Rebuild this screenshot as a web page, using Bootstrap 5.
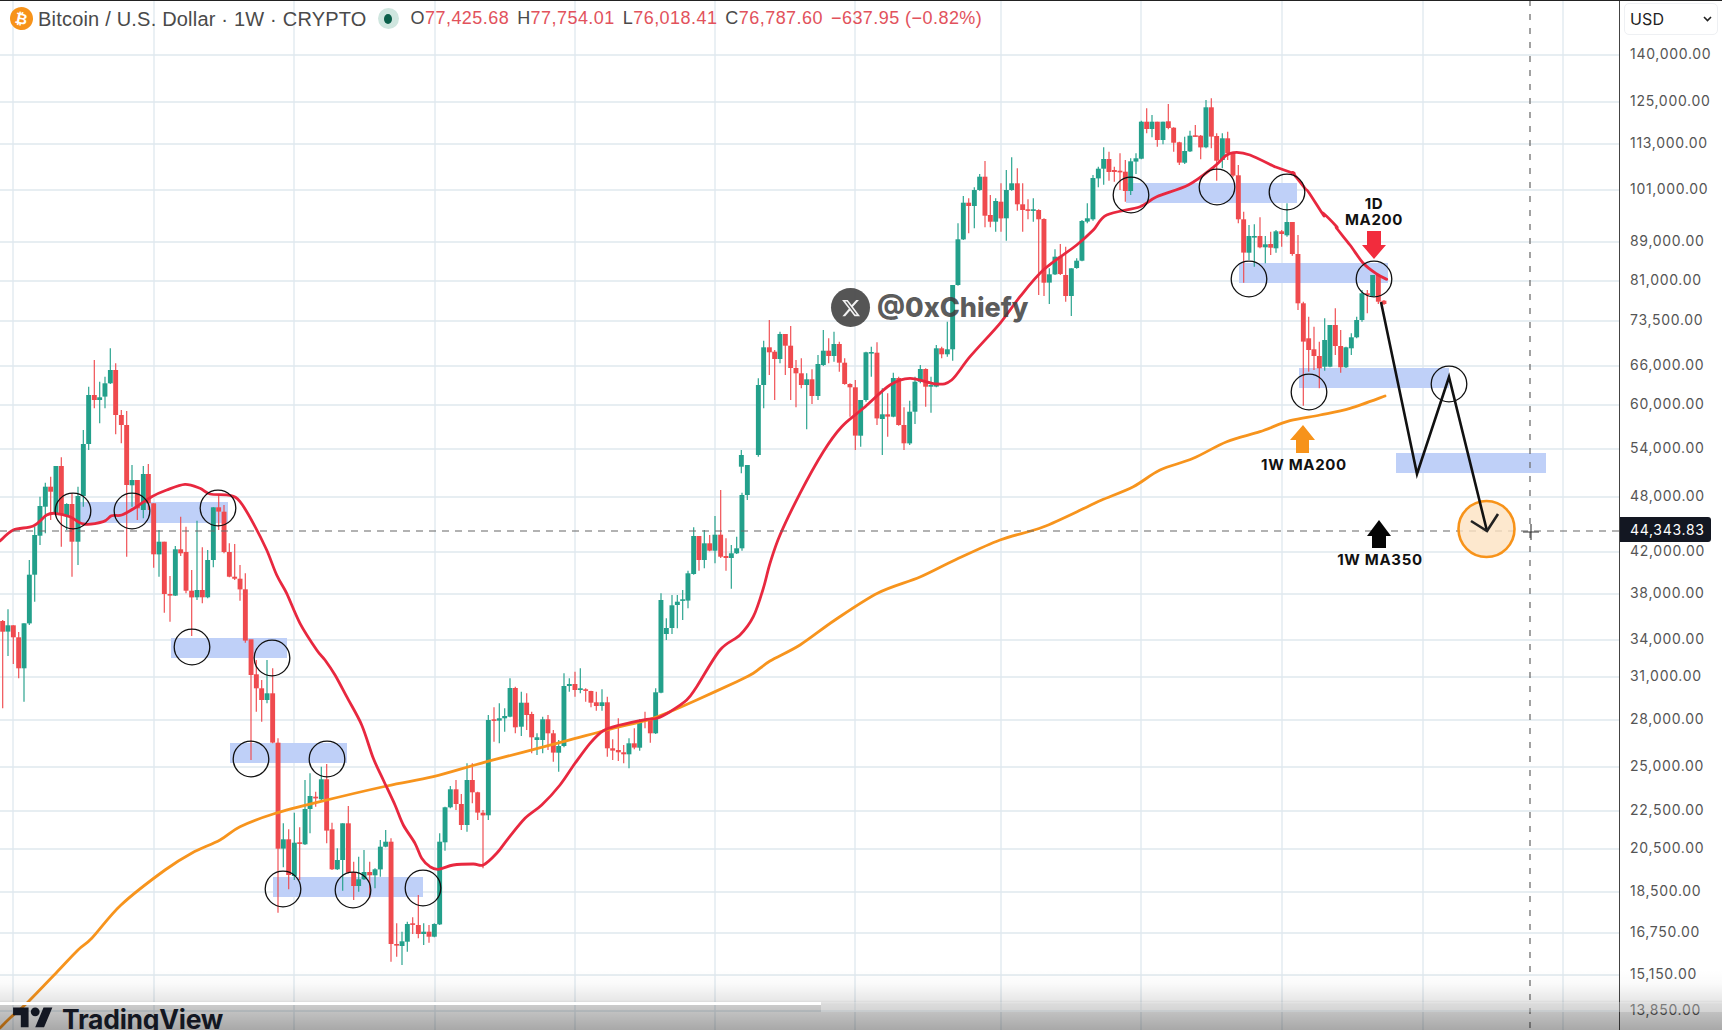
<!DOCTYPE html>
<html lang="en">
<head>
<meta charset="utf-8">
<title>Bitcoin / U.S. Dollar 1W</title>
<link href="https://cdn.jsdelivr.net/npm/bootstrap@5.3.0/dist/css/bootstrap.min.css" rel="stylesheet">
<style>
html,body{height:100%;margin:0;background:#fff;overflow:hidden}
.tv-frame{width:1722px;height:1030px;border-top:1px solid #222}
.tv-chart{width:1619px;flex:none}
.tv-chart svg{display:block}
.tv-legend{height:35px;padding-left:10px;gap:0;font-family:"Liberation Sans",Arial,sans-serif;color:#4a4a4a;white-space:nowrap}
.tv-coin{width:23px;height:23px;border-radius:50%;background:#f7931a;color:#fff;font:700 15px "DejaVu Sans",sans-serif;transform:rotate(12deg)}
.tv-title{font-size:20px;margin-left:5px;letter-spacing:.01em}
.tv-status{width:21px;height:21px;border-radius:50%;background:#cfe6df;margin-left:11px}
.tv-status i{display:block;width:8px;height:10px;border-radius:50%;background:#0b5f4a}
.tv-ohlc{font-size:18px;margin-left:12px;gap:8px;letter-spacing:.025em}
.tv-ohlc b{font-weight:400;color:#e2525c}
.tv-mark{left:831px;top:287px;gap:7px;color:rgba(62,62,62,.86);font:800 27px Inter,"Liberation Sans",sans-serif}
.tv-mark span.tv-x{width:39px;height:39px;border-radius:50%;background:rgba(72,72,72,.93)}
.tv-axis{width:103px;flex:none;border-left:1.5px solid #444;font-family:Inter,"Liberation Sans",sans-serif;font-size:14px;letter-spacing:.05em;color:#555}
.tv-cur{left:4px;right:4px;top:2px;height:32px;padding:0 5px;border:1px solid #eef0f3;border-radius:5px;color:#222;font-size:16px;letter-spacing:.01em}
.tv-tick{left:10px;line-height:16px;margin-top:-10px}
.tv-live{left:0;top:516px;width:91px;height:25px;padding-left:10px;background:#131722;color:#fff;border-radius:0 3px 3px 0;line-height:25px}
.tv-shade{height:60px;pointer-events:none;background:linear-gradient(to bottom,rgba(0,0,0,0) 0,rgba(0,0,0,.02) 14px,rgba(0,0,0,.09) 30px,rgba(0,0,0,.2) 34px,rgba(0,0,0,.34) 100%)}
.tv-progress{bottom:25px;left:0;width:821px;height:3px;background:#fff}
.tv-track{bottom:18px;left:821px;right:0;height:10px;background:rgba(255,255,255,.3)}
.tv-brand{left:13px;bottom:-4px;gap:9px;color:#131722;font:700 26.5px Inter,"Liberation Sans",sans-serif;line-height:30px;letter-spacing:-.01em}
.tv-annot{font:700 15px Inter,"Liberation Sans",sans-serif;fill:#111;letter-spacing:.045em;text-anchor:middle}
</style>
</head>
<body>
<div class="tv-frame position-relative d-flex overflow-hidden">
  <main class="tv-chart position-relative">
    <svg id="chart" width="1619" height="1030" viewBox="0 1 1619 1030" xmlns="http://www.w3.org/2000/svg" aria-label="Bitcoin weekly candlestick chart"></svg>

    <div class="tv-legend position-absolute top-0 start-0 d-flex align-items-center">
      <span class="tv-coin d-flex align-items-center justify-content-center">₿</span>
      <span class="tv-title">Bitcoin / U.S. Dollar · 1W · CRYPTO</span>
      <span class="tv-status d-flex align-items-center justify-content-center"><i></i></span>
      <div class="tv-ohlc d-flex align-items-center">
        <span>O<b>77,425.68</b></span>
        <span>H<b>77,754.01</b></span>
        <span>L<b>76,018.41</b></span>
        <span>C<b>76,787.60</b></span>
        <b>−637.95 (−0.82%)</b>
      </div>
    </div>

    <div class="tv-mark position-absolute d-flex align-items-center">
      <span class="tv-x d-flex align-items-center justify-content-center">
        <svg width="20" height="20" viewBox="0 0 24 24" fill="#f2f2f2"><path d="M18.244 2.25h3.308l-7.227 8.26 8.502 11.24H16.17l-5.214-6.817L4.99 21.75H1.68l7.73-8.835L1.254 2.25H8.08l4.713 6.231zm-1.161 17.52h1.833L7.084 4.126H5.117z"/></svg>
      </span>
      <span>@0xChiefy</span>
    </div>
  </main>

  <aside class="tv-axis position-relative" id="axis">
    <div class="tv-cur position-absolute d-flex align-items-center justify-content-between">
      <span>USD</span>
      <svg width="9" height="6" viewBox="0 0 9 6" fill="none" stroke="#222" stroke-width="1.6"><path d="M1 1l3.5 3.5L8 1"/></svg>
    </div>
  </aside>

  <div class="tv-shade position-absolute bottom-0 start-0 end-0"></div>
  <div class="tv-progress position-absolute"></div>
  <div class="tv-track position-absolute"></div>
  <div class="tv-brand position-absolute d-flex align-items-center">
    <svg width="40" height="31" viewBox="0 0 36 28" fill="#131722"><path d="M14 22H7V11H0V4h14v18zM28 22h-8l7.5-18h8L28 22z"/><circle cx="20" cy="8" r="4"/></svg>
    <span>TradingView</span>
  </div>
</div>

<script>
(function(){
const svg=document.getElementById('chart');
let out='';
const GREEN='#23a08b',RED='#ef4a4e',GRID='#dfe8ee';
const gridY=[55,102,144,190,242,281,321,366,405,449,497,552,594,640,677,720,767,811,849,892,933,975,1011];
const gridX=[13,154,294,435,575,715,855,1001,1141,1282,1423,1563];
gridY.forEach(y=>out+=`<line x1="0" x2="1619" y1="${y}" y2="${y}" stroke="${GRID}" stroke-width="1.3"/>`);
gridX.forEach(x=>out+=`<line x1="${x}" x2="${x}" y1="0" y2="1031" stroke="${GRID}" stroke-width="1.3"/>`);

/* zones */
[[78,502,150,21],[171,638,116,20],[230,743,117,20],[273,877,150,20],[1126,183,171,20],[1239,263,149,20],[1299,368,150,20],[1396,453,150,20]]
.forEach(r=>out+=`<rect x="${r[0]}" y="${r[1]}" width="${r[2]}" height="${r[3]}" fill="#bfd0f8"/>`);

/* candles: traced per crop as x colour high top bottom low */
const crops=[
[0,560,3,`8 r 180 183 215 445;24 g 148 196 215 288;40 r 196 196 232 312;56 r 216 232 325 355;72 g 190 190 325 425;88 g 0 44 190 195`],
[0,340,3,`104 g 560 585 704 785;120 g 470 498 587 615;136 g 428 440 500 580;152 r 410 440 455 540;168 g 378 378 520 525;184 r 352 378 525 620;200 g 490 492 525 570;216 r 460 492 605 710;234 g 440 468 605 675;250 g 270 312 468 500;266 g 140 165 312 330;283 r 60 165 180 205;299 g 125 172 180 250;315 g 110 130 170 205;331 g 25 90 130 132;347 r 70 90 225 283;364 r 210 225 255 310;380 r 213 255 435 650;396 g 375 420 436 500;412 r 420 420 505 540;430 g 378 402 510 535;445 r 372 402 490 510;461 r 490 490 643 683;477 g 570 605 643 710;493 r 605 605 762 818;510 r 708 762 766 845;526 g 618 628 767 768;542 r 530 628 640 648;558 r 560 636 752 760;575 r 690 752 772 888;591 g 542 750 772 780;607 r 622 750 772 790;623 g 630 660 772 775;640 g 502 502 660 682;656 r 465 502 515 570;672 r 495 515 636 640;688 r 610 636 710 712;704 r 612 710 716 720;720 r 675 716 748 782;736 r 700 748 902 908`],
[220,660,3,`93 r -60 -62 45 300;109 r 0 43 85 155;125 r 60 85 120 185;141 g 0 100 120 130;158 r 25 100 248 250;174 r 235 248 566 758;190 g 490 538 566 622;206 r 508 538 645 688;223 g 458 548 648 660;239 r 502 547 549 660;255 g 360 447 553 555;270 g 340 408 447 520;287 r 395 410 415 440;304 g 320 358 418 420;320 r 312 358 512 550;336 r 488 508 628 630;352 g 565 600 628 630;368 g 490 490 600 692;385 r 438 490 638 640;401 r 605 636 678 720;416 g 590 658 678 695;432 g 570 636 658 660;449 r 605 636 646 715;465 g 625 628 646 685;481 g 540 560 628 650;497 g 510 545 560 562;513 r 535 545 852 905;530 r 790 852 856 890;546 g 815 844 858 915;562 g 785 792 845 875;578 r 772 790 793 822;595 r 705 795 822 835;611 g 790 815 822 855;627 r 795 815 830 848;643 g 790 792 830 832;659 g 520 545 793 795;675 g 440 442 547 572;691 g 378 388 442 445;708 r 360 388 432 450;724 r 402 432 495 510;741 g 310 360 495 515;757 r 310 360 397 430;773 r 395 397 458 480;789 r 450 458 466 625;805 g 165 180 466 480;822 r 142 178 180 245;838 g 130 175 182 250;854 g 145 168 175 215;870 g 55 84 170 172;886 r 80 84 202 220;904 g 95 128 200 228;920 r 100 128 165 210;935 r 155 162 232 280;951 g 220 232 240 285;968 g 170 178 240 280;984 r 165 178 220 270;1000 r 210 220 278 305;1016 g 240 258 278 335;1032 g 40 78 258 262;1048 g 55 72 78 95;1065 r 35 72 90 110;1081 g 25 85 90 100;1097 r 85 88 92 125;1113 r 92 93 128 142;1129 r 95 127 138 152;1146 g 88 127 138 152;1162 r 110 127 265 290;1178 r 238 265 272 300;1195 r 175 270 277 303;1211 r 255 277 283 310;1227 g 235 250 283 325;1243 r 205 250 263 268;1259 g 178 182 263 272;1275 r 155 178 182 205;1291 r 175 180 220 248;1307 g 85 97 220 222;1323 g -200 -180 98 100`],
[430,480,3,`709 g 415 444 462 480;726 g 345 376 444 462;742 g 345 365 375 445;758 g 330 358 362 420;774 g 272 280 362 385;791 g 142 168 282 284;807 r 168 168 240 272;823 g 150 190 240 265;839 r 165 190 212 214;855 g 108 164 212 250;872 r 30 164 230 234;888 r 175 228 234 272;904 g 195 220 234 326;920 g 170 205 220 222;936 g 38 45 205 212;952 g -30 -45 45 60`],
[730,150,3,`34 g 900 915 950 970;85 g 685 705 915 920;101 g 572 592 705 775;118 r 510 592 607 675;134 r 600 605 627 750;150 g 545 552 627 640;166 r 552 552 587 675;182 r 528 587 654 750;198 r 630 654 670 772;214 r 625 670 705 715;230 g 670 688 705 838;246 r 658 688 738 762;264 g 615 642 738 750;280 g 540 602 645 648;296 r 565 602 618 640;312 g 545 582 618 635;328 r 575 582 638 665;344 r 625 638 702 704;360 r 700 702 712 800;376 r 690 712 857 900;392 g 750 750 857 890;408 g 605 607 750 755;424 g 590 606 608 680;441 r 577 608 805 825;457 g 715 793 807 915;473 r 730 793 800 860;490 g 668 684 800 802;506 r 680 684 825 827;522 r 772 825 880 900;539 g 752 785 880 885;555 g 680 695 785 822;571 g 645 657 695 700;587 r 655 657 710 770;603 g 680 705 710 788;619 g 585 595 710 712;635 r 590 595 613 625;652 g 515 598 613 620;668 g 405 405 598 632;684 g 220 268 405 407;700 g 138 158 268 270;716 r 145 158 168 250;733 g 112 120 168 235;749 g 72 80 120 122;765 r 33 80 197 232;781 r 135 195 215 232;797 g 145 153 215 245;813 r 100 155 205 245;829 g 60 120 205 272;845 g 22 100 120 122;862 r 55 100 163 182;878 r 100 163 180 245;894 r 148 178 181 208;910 g 145 178 181 215;926 r 178 180 208 435`],
[950,90,3,`282 r 385 387 578 618;298 g 535 553 578 642;315 g 478 500 553 555;331 r 462 500 552 555;347 r 470 555 618 635;364 g 535 535 618 678;380 g 505 512 534 536;396 g 390 393 512 514;412 g 340 385 395 400;429 g 255 264 388 392;445 g 230 236 265 292;461 g 172 207 236 284;477 r 185 207 246 272;493 r 230 240 246 275;510 r 190 242 247 300;526 r 210 245 303 335;542 g 205 214 303 315;558 g 190 205 215 252;574 g 92 95 206 208;590 r 55 95 117 130;606 g 75 95 117 142;622 r 95 95 150 170;639 g 95 95 150 163;655 r 42 94 114 118;671 r 112 113 158 185;688 r 155 157 218 225;704 g 140 183 218 222;720 g 122 137 184 186;736 r 105 136 138 140;752 r 135 137 172 208;768 g 30 52 172 175;784 r 25 52 140 175;800 r 130 138 212 272;817 g 130 145 210 235;833 r 125 145 190 210;849 r 185 190 257 262;865 r 225 256 388 400;881 r 365 388 488 578;897 g 405 438 488 510;913 g 403 438 440 530;930 r 382 438 472 475;946 g 438 463 472 520;962 r 425 462 473 495;978 g 420 424 475 488;995 r 420 424 432 470;1011 g 340 396 436 440;1027 r 396 396 492 497;1044 r 435 492 640 660`],
[1250,340,3,`160 r -115 -110 5 197;176 r -70 -5 30 95;192 r -40 28 48 90;208 r 5 48 85 145;224 g -65 0 80 92;240 g -45 -45 80 82;256 r -95 -45 18 45;272 r -30 18 82 98;288 g 20 22 82 84;304 g -20 -8 25 45;320 g -70 -60 -8 -5;336 g -150 -140 -60 -55;352 r -150 -140 -135 -80;368 g -195 -195 -132 -130;385 r -195 -195 -115 -108;402 r -120 -118 -108 -105`]
];
crops.forEach(([ox,oy,s,rows])=>rows.split(';').forEach(row=>{
  const p=row.split(' '),x=ox+p[0]/s,c=p[1]==='g'?GREEN:RED,[hi,top,bot,lo]=p.slice(2).map(v=>oy+v/s);
  out+=`<path d="M${x.toFixed(1)} ${hi.toFixed(1)}V${lo.toFixed(1)}" stroke="${c}" stroke-width="1.15" fill="none"/>`;
  out+=`<rect x="${(x-2.45).toFixed(1)}" y="${top.toFixed(1)}" width="4.9" height="${Math.max(1.6,bot-top).toFixed(1)}" fill="${c}"/>`;
}));

/* moving averages */
function pts(ox,oy,str){return str.trim().split(/\s+/).map(q=>{const [a,b]=q.split(',').map(Number);return [ox+a/3,oy+b/3];});}
function smooth(P){let d=`M${P[0][0].toFixed(1)} ${P[0][1].toFixed(1)}`;
  for(let i=0;i<P.length-1;i++){const a=P[i-1]||P[i],b=P[i],c=P[i+1],e=P[i+2]||c;
    const k=.16;d+=`C${(b[0]+(c[0]-a[0])*k).toFixed(1)} ${(b[1]+(c[1]-a[1])*k).toFixed(1)} ${(c[0]-(e[0]-b[0])*k).toFixed(1)} ${(c[1]-(e[1]-b[1])*k).toFixed(1)} ${c[0].toFixed(1)} ${c[1].toFixed(1)}`;}
  return d;}
const orange=[[0,1028],[10,1018],[27,1003],[57,972],[78,950],[92,938],[121,905],[165,870],[192,853]]
 .concat(pts(220,660,'0,540 60,500 160,462 300,425 500,378 640,350 800,305 1030,245 1160,210 1290,178'))
 .concat(pts(430,480,'720,695 800,660 920,605 970,580 1020,543'))
 .concat([[800,645],[835,620],[878,593],[920,577],[955,560],[1000,540],[1043,527],[1087,507]])
 .concat(pts(800,270,'905,690 1000,650 1080,600 1180,565 1280,515 1380,485'))
 .concat(pts(1250,340,'120,242 210,225 300,205 405,168'));
const red=pts(0,340,'0,603 40,570 100,558 140,525 165,520 210,530 250,552 310,545 335,527 365,525 410,500 455,470 500,450 555,433 600,445 630,462 690,466 720,485 760,550 800,630 830,705 860,760 900,850 950,930')
 .concat(pts(220,660,'315,0 345,45 380,110 425,195 460,295 490,360 525,435 550,495 585,550 605,595 630,620 655,628 700,615 760,612 790,615 830,580 865,535 915,475 965,435 1020,375 1065,310 1110,250 1150,212 1200,195 1280,178'))
 .concat(pts(430,480,'680,715 720,695 770,660 800,620 870,510 930,465 970,410 1000,325 1020,250'))
 .concat([[780,535]])
 .concat(pts(800,270,'0,670 70,545 125,470 190,415 270,345 330,325 410,342 455,330 510,260 600,160 660,80'))
 .concat(pts(950,90,'280,540 380,465 430,420 470,375 570,350 620,320 715,285 790,232 830,195 860,187 900,195 970,228 1030,250 1065,295 1120,375 1160,410 1200,465'))
 .concat(pts(1250,0,'75,500 130,520 175,575 220,640 260,685 340,790 380,822 410,838'));
red.sort((a,b)=>a[0]-b[0]);
out+=`<path d="${smooth(orange)}" fill="none" stroke="#f7941d" stroke-width="2.8" stroke-linecap="round"/>`;
out+=`<path d="${smooth(red)}" fill="none" stroke="#e8283f" stroke-width="2.8" stroke-linecap="round"/>`;

/* crosshair */
out+=`<line x1="0" x2="1619" y1="531" y2="531" stroke="#666" stroke-width="1.1" stroke-dasharray="7 6"/>`;
out+=`<line x1="1530" x2="1530" y1="0" y2="1031" stroke="#707070" stroke-width="1.3" stroke-dasharray="6 8"/>`;
out+=`<path d="M1523 532h16M1531 524v16" stroke="#333" stroke-width="1.1" fill="none"/>`;

/* circles */
[[73,511],[132,511],[218,508],[192,647],[272,658],[251,759],[327,759],[283,889],[353,890],[423,888],[1131,195],[1217,187],[1287,192],[1249,279],[1374,279],[1309,392],[1449,384]]
.forEach(c=>out+=`<circle cx="${c[0]}" cy="${c[1]}" r="17.8" fill="none" stroke="#111" stroke-width="1.3"/>`);
out+=`<circle cx="1486.5" cy="529" r="28" fill="#fde2c2" fill-opacity=".8" stroke="#f7931a" stroke-width="2.6"/>`;

/* forecast path */
out+=`<path d="M1381 302L1417 474L1449 377L1487 531" fill="none" stroke="#111" stroke-width="2.6" stroke-linejoin="miter"/>`;
out+=`<path d="M1471 521L1487 531L1498 514" fill="none" stroke="#222" stroke-width="2.6"/>`;

/* arrows */
out+=`<path d="M1367 231h14v14h5l-12 14-12-14h5z" fill="#f22c3d"/>`;
out+=`<path d="M1303 425l12 15h-6v13h-13v-13h-6z" fill="#f7931a"/>`;
out+=`<path d="M1379 520l12 16h-5v12h-14v-12h-5z" fill="#050505"/>`;

/* annotations */
[['1D',1374,209],['MA200',1374,225],['1W MA200',1304,470],['1W MA350',1380,565]]
.forEach(t=>out+=`<text class="tv-annot" x="${t[1]}" y="${t[2]}">${t[0]}</text>`);
svg.innerHTML=out;

/* price axis */
const axis=document.getElementById('axis');
const ticks=[['140,000.00',55],['125,000.00',102],['113,000.00',144],['101,000.00',190],['89,000.00',242],['81,000.00',281],['73,500.00',321],['66,000.00',366],['60,000.00',405],['54,000.00',449],['48,000.00',497],['42,000.00',552],['38,000.00',594],['34,000.00',640],['31,000.00',677],['28,000.00',720],['25,000.00',767],['22,500.00',811],['20,500.00',849],['18,500.00',892],['16,750.00',933],['15,150.00',975],['13,850.00',1011]];
ticks.forEach(([t,y])=>{const s=document.createElement('span');s.className='tv-tick position-absolute';s.style.top=y+'px';s.textContent=t;axis.appendChild(s);});
const live=document.createElement('div');live.className='tv-live position-absolute';live.textContent='44,343.83';axis.appendChild(live);
})();
</script>
<script src="https://cdn.jsdelivr.net/npm/bootstrap@5.3.0/dist/js/bootstrap.bundle.min.js"></script>
</body>
</html>
